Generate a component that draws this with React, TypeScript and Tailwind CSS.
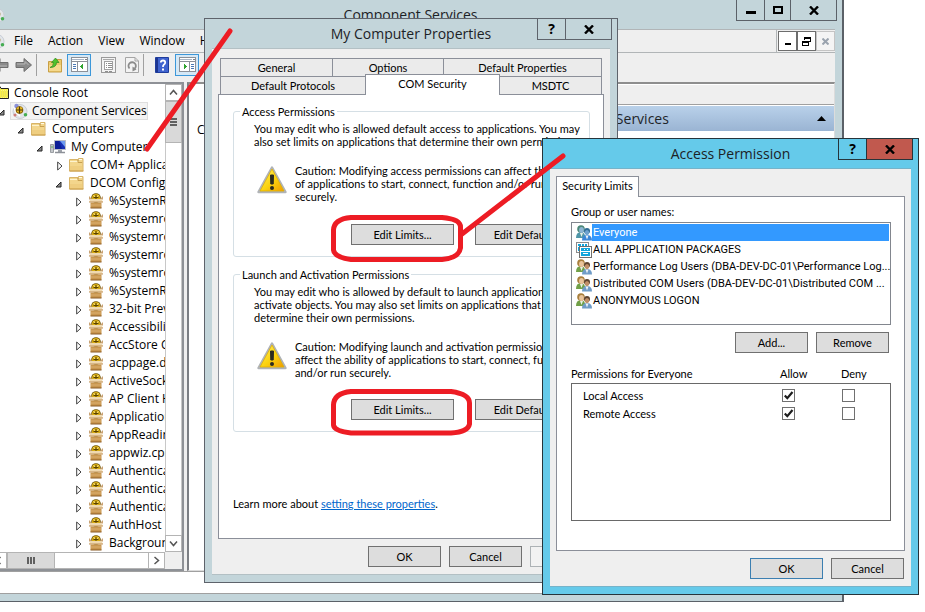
import type { ReactNode } from "react";

const uiFont = "font-['Open_Sans','Noto_Sans',sans-serif]";

/* ---------- icons ---------- */

function ComponentIcon() {
  return (
    <svg width="16" height="16" viewBox="0 0 16 16" className="shrink-0" aria-hidden="true">
      <circle cx="8" cy="8.500" r="7" fill="#e3e6ea" stroke="#c9ced6" />
      <path d="M2 4Q3 10 8 13" stroke="#fff" strokeWidth="1.500" fill="none" />
      <circle cx="4.500" cy="3" r="2.200" fill="#8a90d8" />
      <circle cx="7.500" cy="7" r="3.800" fill="#8a6200" />
      <circle cx="7.500" cy="6.800" r="3" fill="#e8bc2c" />
      <path d="M7.500 3.500v7M4 7h7" stroke="#4a3608" strokeWidth="1.200" />
      <circle cx="3" cy="12" r="1.500" fill="#cf7b78" />
      <circle cx="13.500" cy="11.800" r="1.800" fill="#45ad52" />
    </svg>
  );
}

function FolderIcon() {
  return (
    <svg width="16" height="16" viewBox="0 0 16 16" className="shrink-0" aria-hidden="true">
      <path d="M.5 2.500h8v1h1v-2h4.500v12.500H.5z" fill="#f3d68c" stroke="#d8b468" />
      <path d="M9.500 2.500h3.500" stroke="#fffbe8" />
      <path d="M1 4.500h7.500l1 1h4" stroke="#fdf3cf" fill="none" />
      <path d="M1 9h12.500v5H1z" fill="#ecc878" opacity=".6" />
      <path d="M9 2v3.500h4.500" stroke="#c8a050" fill="none" />
      <path d="M.5 14h14" stroke="#c99d48" />
    </svg>
  );
}

function RootFolderIcon() {
  return (
    <svg width="16" height="16" viewBox="0 0 16 16" className="shrink-0" aria-hidden="true">
      <path d="M1 4V13.500h14.500v-10H8l-1-2H2L1 3z" fill="#f8ef4a" stroke="#222" />
      <path d="M2 6h13M2 8h13M2 10h13M2 12h13" stroke="#fdfac0" strokeDasharray="1 1" />
      <path d="M2 7h13M2 9h13M2 11h13" stroke="#d9cf30" strokeDasharray="1 1" />
    </svg>
  );
}

function ComputerIcon() {
  return (
    <svg width="16" height="16" viewBox="0 0 16 16" className="shrink-0" aria-hidden="true">
      <path d="M.5 5.500h3v8h-3z" fill="#c4c7cb" stroke="#9a9ea3" />
      <path d="M1 8h2" stroke="#5fb15a" />
      <path d="M4.500 1.500h11v9h-11z" fill="#1730b5" stroke="#b9bdc6" />
      <path d="M10 2h5v6z" fill="#6f9bf0" />
      <path d="M5 2h4l3 8H5z" fill="#0d1f96" />
      <path d="M8 11h4v2H8z" fill="#9fa3aa" />
      <path d="M5 13.500h10" stroke="#8d9198" strokeWidth="1.500" />
    </svg>
  );
}

function BoxIcon() {
  return (
    <svg width="16" height="16" viewBox="0 0 16 16" className="shrink-0" aria-hidden="true">
      <circle cx="8" cy="5" r="4.800" fill="#6b5000" />
      <circle cx="8" cy="5" r="4" fill="#d9ae14" />
      <path d="M5.500 2.500l1.500 1M9 3.500l1.500-1" stroke="#fff0a0" />
      <path d="M8 2v4M5.500 4.500h5" stroke="#5a4200" />
      <path d="M1 3l3.500 3.500H1zM15 3l-3.500 3.500H15z" fill="#c9a273" />
      <path d="M2.500 6h11l1.500 3H1z" fill="#efd9b0" />
      <path d="M1 9h14" stroke="#c0935c" />
      <path d="M2.500 9.500h11V15h-11z" fill="#c8964f" />
      <path d="M3 12h10" stroke="#dcb073" />
      <path d="M2.500 15h11" stroke="#8a5a24" />
    </svg>
  );
}

function WarningIcon() {
  return (
    <svg width="32" height="30" viewBox="0 0 32 30" className="shrink-0" aria-hidden="true">
      <defs>
        <linearGradient id="warn" x1="0" y1="0" x2="1" y2="1">
          <stop offset="0" stopColor="#fff36a" />
          <stop offset="0.550" stopColor="#fbd20e" />
          <stop offset="1" stopColor="#f09c00" />
        </linearGradient>
      </defs>
      <path d="M15 3.500L28.500 28H1.500z" fill="#d8dadc" stroke="#b0b3b6" strokeWidth="2.400" strokeLinejoin="round" />
      <path d="M15 5L27 27H3z" fill="url(#warn)" stroke="#e0b000" strokeWidth=".8" />
      <path d="M13.500 11h3l-.3 9h-2.400z" fill="#2a2a20" stroke="#2a2a20" strokeLinejoin="round" />
      <circle cx="15" cy="24" r="2" fill="#2a2a20" />
    </svg>
  );
}

function UsersIcon({ selected = false }: { selected?: boolean }) {
  const back = selected ? "#4f96a8" : "#71a048";
  const front = selected ? "#3c87d8" : "#6f9cc8";
  const hair = selected ? "#4b8878" : "#a87f3c";
  const face = selected ? "#8db5d4" : "#e9c49c";
  return (
    <svg width="16" height="16" viewBox="0 0 16 16" className="shrink-0" aria-hidden="true">
      <path d="M0 13q0-6 5-6 4 0 4.500 6z" fill={back} />
      <path d="M4 8l1.500 4L7 8z" fill="#e8f0e6" />
      <circle cx="5" cy="4" r="3.800" fill={hair} />
      <ellipse cx="5.500" cy="5" rx="2.400" ry="2.900" fill={face} />
      <path d="M6 15.500q0-5.500 5-5.500t5 5.500z" fill={front} />
      <path d="M9.500 10.500l1.500 4 1.500-4z" fill="#eef3f8" />
      <circle cx="11" cy="6" r="3" fill={selected ? "#2f6c94" : "#5e4430"} />
      <ellipse cx="11" cy="7.600" rx="2.200" ry="2.600" fill={selected ? "#6ea2cf" : "#c08f68"} />
    </svg>
  );
}

function PackagesIcon() {
  return (
    <svg width="16" height="16" viewBox="0 0 16 16" className="shrink-0" shapeRendering="crispEdges" aria-hidden="true">
      <path d="M.5.5h12v10H.5z" fill="#fff" stroke="#8a8a8a" />
      <path d="M2 2h3v2H2zM6 2h2v2H6zM9 2h2v2H9zM2 5h9v4H2z" fill="#11a5dc" />
      <path d="M3.500 4.500h12v11h-12z" fill="#fff" stroke="#6e6e6e" />
      <path d="M5 6h9v8H5z" fill="#11a5dc" />
      <path d="M8 7h1v1H8zM11 7h1v1h-1zM5 9h9v1H5zM7 11h5v1H7z" fill="#fff" />
    </svg>
  );
}

function NavArrow({ back = false }: { back?: boolean }) {
  return (
    <svg width="18" height="16" viewBox="0 0 18 16" className={back ? "shrink-0 rotate-180" : "shrink-0"} aria-hidden="true">
      <path d="M1 5.500h8V1.500L16.500 8 9 14.500v-4H1z" fill="#8b8b8b" stroke="#6e6e6e" />
      <path d="M2 7h8V4.500L13.500 8" stroke="#b5b5b5" fill="none" />
    </svg>
  );
}

function UpFolderIcon() {
  return (
    <svg width="16" height="16" viewBox="0 0 16 16" className="shrink-0" aria-hidden="true">
      <path d="M1.500 4.500h7l1-2h5v12.500h-13z" fill="#ecc96c" stroke="#c89f45" />
      <path d="M2 8h12v6H2z" fill="#f5d98d" />
      <path d="M3 10.500q3.500-1 3.500-5H4.500L8.500 1l3.500 4.500H9.500q0 5-6.500 5z" fill="#4ec22e" stroke="#2c8a1c" strokeWidth=".7" />
    </svg>
  );
}

function PaneIcon({ right = false }: { right?: boolean }) {
  return (
    <svg width="17" height="15" viewBox="0 0 17 15" className="shrink-0" shapeRendering="crispEdges" aria-hidden="true">
      <path d="M.5.5h16v14H.5z" fill="#fff" stroke="#8c9098" />
      <path d="M1 2.500h12" stroke="#a8b4c4" />
      <path d="M14 2.500h2" stroke="#7c8088" />
      <path d="M1 4.500h15" stroke="#8c9098" />
      {right ? (
        <>
          <path d="M10.500 5v10" stroke="#8c9098" />
          <path d="M12 7.500h3M12 9.500h3M12 11.500h3" stroke="#4b79b5" />
          <path d="M5 7l3 2.500L5 12z" fill="#2fa32f" />
        </>
      ) : (
        <>
          <path d="M6.500 5v10" stroke="#8c9098" />
          <path d="M2 7.500h3M2 9.500h3M2 11.500h3" stroke="#4b79b5" />
          <path d="M12 7L9 9.500l3 2.500z" fill="#2fa32f" />
        </>
      )}
    </svg>
  );
}

function PropertiesIcon() {
  return (
    <svg width="16" height="16" viewBox="0 0 16 16" className="shrink-0" shapeRendering="crispEdges" aria-hidden="true">
      <path d="M.5.5h14v15H.5z" fill="#f3f3f3" stroke="#9a9a9a" />
      <path d="M2 2.500h11" stroke="#a8a8a8" />
      <path d="M3.500 4.500h8v8h-8z" fill="#fff" stroke="#a0a0a0" />
      <path d="M5 6.500h1M7 6.500h4M5 8.500h1M7 8.500h4M5 10.500h1M7 10.500h4M4 14.500h3M8 14.500h3" stroke="#8e8e8e" />
    </svg>
  );
}

function RefreshIcon() {
  return (
    <svg width="14" height="16" viewBox="0 0 14 16" className="shrink-0" aria-hidden="true">
      <path d="M.5.5h9.500l3.500 3.500v11.500H.5z" fill="#f3f3f3" stroke="#a5a5a5" />
      <path d="M10 .5v3.500h3.500" fill="none" stroke="#a5a5a5" />
      <path d="M4.500 11.500a3.700 3.700 0 1 1 5 .3" fill="none" stroke="#8c8c8c" strokeWidth="1.800" />
      <path d="M7.500 9.500v5l4-2z" fill="#8c8c8c" />
    </svg>
  );
}

function HelpIcon() {
  return (
    <svg width="14" height="16" viewBox="0 0 14 16" className="shrink-0" aria-hidden="true">
      <path d="M.5.5h13v15H.5z" fill="#3f63cf" stroke="#1e3c9c" />
      <path d="M1 1h2v14H1z" fill="#1c3590" />
      <path d="M5.800 5.500q0-2 2.200-2t2.200 2q0 1.200-1.200 2T8 10" fill="none" stroke="#fff" strokeWidth="1.800" />
      <path d="M7 11.500h2v2H7z" fill="#fff" />
    </svg>
  );
}

function CloseGlyph() {
  return (
    <svg width="10" height="9" viewBox="0 0 10 9" fill="none" stroke="#000" strokeWidth="2.400" aria-hidden="true">
      <path d="M1 0.500L9 8.500M9 0.500L1 8.500" />
    </svg>
  );
}

function Chevron({ d }: { d: string }) {
  return (
    <svg width="9" height="9" viewBox="0 0 9 9" fill="none" stroke="#555" strokeWidth="1.500" aria-hidden="true">
      <path d={d} />
    </svg>
  );
}

/* ---------- tree ---------- */

function TreeArrow({ state }: { state: "open" | "closed" | "none" }) {
  return (
    <span className="flex w-3 shrink-0 items-center pt-0.5">
      {state === "open" && (
        <svg width="7" height="7" viewBox="0 0 7 7" className="-ml-0.5" aria-hidden="true">
          <path d="M6 1v5H1z" fill="#8a8a8a" stroke="#262626" />
        </svg>
      )}
      {state === "closed" && (
        <svg width="6" height="10" viewBox="0 0 6 10" aria-hidden="true">
          <path d="M.7 1v8L5 5z" fill="#fff" stroke="#404040" />
        </svg>
      )}
    </span>
  );
}

type NodeProps = {
  icon: ReactNode;
  label: string;
  state?: "open" | "closed" | "none";
  selected?: boolean;
  children?: ReactNode;
};

function TreeNode({ icon, label, state = "closed", selected = false, children }: NodeProps) {
  return (
    <li role="treeitem" aria-selected={selected}>
      <div className="flex h-[18px] items-center whitespace-nowrap">
        <TreeArrow state={state} />
        <span
          className={
            selected
              ? "-ml-0.5 flex h-[18px] items-center gap-1 border border-[#dedede] bg-[#f3f3f3] pl-px"
              : "flex items-center gap-[5px]"
          }
        >
          {icon}
          {label}
        </span>
      </div>
      {children && (
        <ul role="group" className="pl-[19px]">
          {children}
        </ul>
      )}
    </li>
  );
}

const dcomItems = [
  "%SystemRoot%",
  "%systemroot%",
  "%systemroot%",
  "%systemroot%",
  "%systemroot%",
  "%SystemRoot%",
  "32-bit Preview",
  "Accessibility",
  "AccStore Class",
  "acppage.dll",
  "ActiveSocket",
  "AP Client Host",
  "Application",
  "AppReadiness",
  "appwiz.cpl",
  "Authentication",
  "Authentication",
  "Authentication",
  "AuthHost",
  "Background",
];

/* ---------- main window ---------- */

function ScrollButton({ label, d, className }: { label: string; d: string; className: string }) {
  return (
    <button aria-label={label} className={`flex shrink-0 items-center justify-center border border-[#b4b4b4] bg-white ${className}`}>
      <Chevron d={d} />
    </button>
  );
}

function ConsoleTree() {
  return (
    <div className="flex w-[184px] shrink-0 flex-col border-t-2 border-r-2 border-b-2 border-[#8e9196] bg-white">
      <div className="flex h-[468px]">
        <ul role="tree" className="-ml-[19px] min-w-0 flex-1 overflow-hidden text-xs">
          <TreeNode icon={<RootFolderIcon />} label="Console Root" state="none">
            <TreeNode icon={<ComponentIcon />} label="Component Services" state="open" selected>
              <TreeNode icon={<FolderIcon />} label="Computers" state="open">
                <TreeNode icon={<ComputerIcon />} label="My Computer" state="open">
                  <TreeNode icon={<FolderIcon />} label="COM+ Applications" />
                  <TreeNode icon={<FolderIcon />} label="DCOM Config" state="open">
                    {dcomItems.map((name, i) => (
                      <TreeNode key={i} icon={<BoxIcon />} label={name} />
                    ))}
                  </TreeNode>
                </TreeNode>
              </TreeNode>
            </TreeNode>
          </TreeNode>
        </ul>
        <div className="flex w-[17px] shrink-0 flex-col border-x border-[#c8c8c8]">
          <ScrollButton label="Scroll up" d="M1 6.500L4.500 2.500 8 6.500" className="-mx-px h-[17px]" />
          <div className="-mx-px flex h-[42px] flex-col items-center justify-center gap-px border border-[#b4b4b4] bg-[#d9d9d9]">
            <span className="h-0.5 w-[7px] bg-[#606060]" />
            <span className="h-0.5 w-[7px] bg-[#606060]" />
            <span className="h-0.5 w-[7px] bg-[#606060]" />
          </div>
          <div className="flex-1" />
          <ScrollButton label="Scroll down" d="M1 2.500L4.500 6.500 8 2.500" className="-mx-px h-[17px]" />
        </div>
      </div>
      <div className="flex h-[17px] bg-[#efefef] pr-[17px]">
        <div className="flex flex-1 border-y border-[#b4b4b4] bg-white">
          <ScrollButton label="Scroll left" d="M6.500 1L2.500 4.500 6.500 8" className="-my-px -ml-[10px] w-[17px]" />
          <div className="-my-px flex w-12 items-center justify-center gap-px border border-[#b4b4b4] bg-[#d9d9d9]">
            <span className="h-[7px] w-0.5 bg-[#606060]" />
            <span className="h-[7px] w-0.5 bg-[#606060]" />
            <span className="h-[7px] w-0.5 bg-[#606060]" />
          </div>
          <div className="flex-1" />
          <ScrollButton label="Scroll right" d="M2.500 1L6.500 4.500 2.500 8" className="-my-px w-[17px]" />
        </div>
      </div>
    </div>
  );
}

function MainWindow() {
  return (
    <section
      aria-label="Component Services"
      className={`absolute top-0 left-0 flex h-[602px] w-[844px] flex-col border-r-2 border-b border-[#5b6168] bg-[#c3d5da] pr-[7px] pb-[7px] text-black ${uiFont}`}
    >
      <header className="flex h-[29px] shrink-0 items-center">
        <span className="-ml-[11px]">
          <ComponentIcon />
        </span>
        <h1 className="flex-1 pl-20 text-center text-sm text-[#1c2226]">Component Services</h1>
        <div className="-mr-0.5 flex h-[21px] self-start border-x border-b border-[#5b6168]">
          <button aria-label="Minimize" className="flex w-7 items-center justify-center border-r border-[#5b6168]">
            <span className="mt-1 h-[3px] w-2.5 bg-black" />
          </button>
          <button aria-label="Maximize" className="flex w-[26px] items-center justify-center border-r border-[#5b6168]">
            <span className="h-2 w-2.5 border-2 border-black" />
          </button>
          <button aria-label="Close" className="flex w-[45px] items-center justify-center">
            <CloseGlyph />
          </button>
        </div>
      </header>

      <nav className="flex h-6 shrink-0 items-stretch border-y border-[#b1b5b7] bg-[#efefef] text-xs">
        <div className="flex flex-1 items-center gap-[15px] border-r border-[#b1b5b7]">
          <span className="-mr-1.5 -ml-[11px]">
            <ComponentIcon />
          </span>
          <button>File</button>
          <button>Action</button>
          <button>View</button>
          <button>Window</button>
          <button>Help</button>
        </div>
        <div className="ml-px flex h-5 self-center">
          <button aria-label="Minimize child" className="flex w-[19px] items-center justify-center border border-[#6d6d6d] bg-white">
            <span className="mt-1.5 h-0.5 w-1.5 bg-black" />
          </button>
          <button aria-label="Restore child" className="flex w-[19px] items-center justify-center border border-[#6d6d6d] bg-white">
            <svg width="9" height="9" viewBox="0 0 9 9" fill="none" stroke="#000" shapeRendering="crispEdges" aria-hidden="true">
              <path d="M2.500 3V.5h6v4H7M2 1.500h7M.5 4.500h6v4h-6zM0 5.500h7" />
            </svg>
          </button>
          <button aria-label="Close child" className="flex w-[19px] items-center justify-center border border-[#c4c4c4] bg-[#f4f4f4]">
            <svg width="7" height="7" viewBox="0 0 7 7" stroke="#9aa3ae" strokeWidth="2" aria-hidden="true">
              <path d="M.5.5l6 6M6.500.5l-6 6" />
            </svg>
          </button>
        </div>
      </nav>

      <div className="flex h-[29px] shrink-0 items-center bg-[#efefef] pb-1.5">
        <button aria-label="Back" className="-ml-[9px]">
          <NavArrow back />
        </button>
        <button aria-label="Forward" className="ml-1.5">
          <NavArrow />
        </button>
        <span className="ml-[3px] h-[22px] w-px bg-[#a0a0a0]" />
        <button aria-label="Up one level" className="ml-2.5">
          <UpFolderIcon />
        </button>
        <button aria-label="Show console tree" className="ml-1 flex h-[22px] w-6 items-center justify-center border border-[#3c97d9] bg-[#d5e8f6]">
          <PaneIcon />
        </button>
        <button aria-label="Properties" className="ml-2.5">
          <PropertiesIcon />
        </button>
        <button aria-label="Refresh" className="ml-2">
          <RefreshIcon />
        </button>
        <span className="ml-1 h-[22px] w-px bg-[#a0a0a0]" />
        <button aria-label="Help topics" className="ml-[11px]">
          <HelpIcon />
        </button>
        <button aria-label="Show action pane" className="ml-1.5 flex h-[22px] w-6 items-center justify-center border border-[#3c97d9] bg-[#d5e8f6]">
          <PaneIcon right />
        </button>
      </div>

      <div className="flex shrink-0 bg-[#efefef]">
        <ConsoleTree />
        <div className="ml-[3px] flex flex-1 border-t-2 border-r border-b border-l-2 border-t-[#8e8e8e] border-r-[#dcdcdc] border-b-[#dcdcdc] border-l-[#7c7f84] bg-white">
          <div className="w-[300px] pt-[38px] pl-2 text-xs">Computers</div>
          <div className="flex-1 pt-px">
            <div className="h-5 border-b border-[#a0a0a0] bg-[#efefef]" />
            <div className="mt-px flex h-[25px] items-center bg-linear-to-b from-[#b9d1ea] to-[#9ab4d3] pr-2 pl-[46px] text-sm text-[#1e2429]">
              <span className="flex-1">Component Services</span>
              <svg width="9" height="5" viewBox="0 0 9 5" aria-hidden="true">
                <path d="M4.500 0L9 5H0z" />
              </svg>
            </div>
          </div>
        </div>
      </div>
      <div className="flex-1 border-y border-[#a0a0a0] bg-white" />
    </section>
  );
}

/* ---------- dialogs ---------- */

const dialogFont = "font-['Lato','Liberation_Sans',Arial,sans-serif] text-[11px] leading-[13px] text-black";

function PushButton({
  children,
  className,
  look = "border-[#707070] bg-[#dddddd]",
  disabled,
}: {
  children: ReactNode;
  className: string;
  look?: string;
  disabled?: boolean;
}) {
  return (
    <button disabled={disabled} className={`h-[21px] border text-center ${look} ${className}`}>
      {children}
    </button>
  );
}

function DialogHeader({ title, line, close }: { title: string; line: string; close: string }) {
  return (
    <header className="relative flex h-[29px] shrink-0 items-center justify-center">
      <h2 className={`text-sm text-[#1c2226] ${uiFont}`}>{title}</h2>
      <div className={`absolute -top-px -right-0.5 flex h-[22px] border ${line}`}>
        <button aria-label="Help" className={`w-7 border-r text-center text-sm leading-none font-bold ${line} ${uiFont}`}>
          ?
        </button>
        <button aria-label="Close" className={`flex w-[45px] items-center justify-center ${close}`}>
          <CloseGlyph />
        </button>
      </div>
    </header>
  );
}

const tabLook = "border border-[#8b8f99] bg-[#ebebeb] text-center";

function PermissionGroup({
  title,
  intro,
  caution,
  buttonGap,
}: {
  title: string;
  intro: string[];
  caution: string[];
  buttonGap: string;
}) {
  return (
    <fieldset className="rounded-[3px] border border-[#d5dfe5] pb-[11px] pl-5">
      <legend className="-ml-[14px] px-0.5 leading-[13px]">{title}</legend>
      <p className="mt-1">
        {intro.map((line) => (
          <span key={line} className="block whitespace-nowrap">
            {line}
          </span>
        ))}
      </p>
      <div className="mt-4 flex items-start gap-1.5 pl-[3px]">
        <WarningIcon />
        <p>
          {caution.map((line) => (
            <span key={line} className="block whitespace-nowrap">
              {line}
            </span>
          ))}
        </p>
      </div>
      <div className={`flex gap-[21px] pl-[97px] ${buttonGap}`}>
        <PushButton className="w-[103px]">Edit Limits...</PushButton>
        <PushButton className="w-[103px]">Edit Default...</PushButton>
      </div>
    </fieldset>
  );
}

function PropertiesDialog() {
  return (
    <section
      role="dialog"
      aria-label="My Computer Properties"
      className={`absolute top-[18px] left-[204px] flex h-[565px] w-[414px] flex-col border border-[#5e636b] bg-[#c3d5da] px-[7px] pb-[7px] ${dialogFont}`}
    >
      <DialogHeader title="My Computer Properties" line="border-[#5e636b]" close="" />
      <div className="flex flex-1 flex-col border-y border-[#b3c0c4] bg-[#efefef] px-[6px] pt-[9px]">
        <div role="tablist" className="px-0.5">
          <div className="flex h-[18px]">
            <button role="tab" className={`w-[113px] border-b-0 ${tabLook}`}>General</button>
            <button role="tab" className={`-ml-px w-[112px] border-b-0 ${tabLook}`}>Options</button>
            <button role="tab" className={`-ml-px flex-1 border-b-0 ${tabLook}`}>Default Properties</button>
          </div>
          <div className="flex h-[18px] items-end">
            <button role="tab" className={`h-[18px] w-[146px] border-b-0 ${tabLook}`}>Default Protocols</button>
            <button
              role="tab"
              aria-selected="true"
              className="relative -mx-px -mb-px h-[21px] w-[135px] border border-b-0 border-[#8b8f99] bg-white pb-1 text-center"
            >
              COM Security
            </button>
            <button role="tab" className={`h-[18px] flex-1 border-b-0 ${tabLook}`}>MSDTC</button>
          </div>
        </div>
        <div role="tabpanel" className="flex h-[445px] flex-col border border-[#8b8f99] bg-white pt-2.5 pr-[13px] pl-3.5">
          <PermissionGroup
            title="Access Permissions"
            buttonGap="mt-[21px]"
            intro={[
              "You may edit who is allowed default access to applications. You may",
              "also set limits on applications that determine their own permissions.",
            ]}
            caution={[
              "Caution: Modifying access permissions can affect the ability",
              "of applications to start, connect, function and/or run",
              "securely.",
            ]}
          />
          <div className="h-[11px]" />
          <PermissionGroup
            title="Launch and Activation Permissions"
            buttonGap="mt-5"
            intro={[
              "You may edit who is allowed by default to launch applications or",
              "activate objects. You may also set limits on applications that",
              "determine their own permissions.",
            ]}
            caution={[
              "Caution: Modifying launch and activation permissions can",
              "affect the ability of applications to start, connect, function",
              "and/or run securely.",
            ]}
          />
          <p className="mt-auto mb-7">
            Learn more about{" "}
            <a href="#properties" className="text-[#0066cc] underline">
              setting these properties
            </a>
            .
          </p>
        </div>
        <div className="mt-[7px] flex justify-end gap-2 pr-px">
          <PushButton className="w-[73px]">OK</PushButton>
          <PushButton className="w-[73px]">Cancel</PushButton>
          <PushButton className="w-[73px]" look="border-[#adb2b5] bg-[#f2f2f2] text-[#9a9a9a]" disabled>
            Apply
          </PushButton>
        </div>
      </div>
    </section>
  );
}

const principals = [
  { name: "Everyone", icon: <UsersIcon selected />, selected: true },
  { name: "ALL APPLICATION PACKAGES", icon: <PackagesIcon />, selected: false },
  { name: "Performance Log Users (DBA-DEV-DC-01\\Performance Log...", icon: <UsersIcon />, selected: false },
  { name: "Distributed COM Users (DBA-DEV-DC-01\\Distributed COM ...", icon: <UsersIcon />, selected: false },
  { name: "ANONYMOUS LOGON", icon: <UsersIcon />, selected: false },
];

function Tick({ label, checked = false }: { label: string; checked?: boolean }) {
  return (
    <span className="relative block size-[13px]">
      <input
        type="checkbox"
        aria-label={label}
        defaultChecked={checked}
        className="peer block size-[13px] appearance-none border border-[#707070] bg-white"
      />
      <svg
        width="13"
        height="13"
        viewBox="0 0 13 13"
        className="pointer-events-none absolute inset-0 hidden peer-checked:block"
        fill="none"
        stroke="#1d1d1d"
        strokeWidth="2.200"
        aria-hidden="true"
      >
        <path d="M2.800 6.500L5.300 9.200 10.500 3" />
      </svg>
    </span>
  );
}

function AccessDialog() {
  return (
    <section
      role="dialog"
      aria-label="Access Permission"
      className={`absolute top-[138px] left-[542px] flex h-[457px] w-[377px] flex-col border border-[#26343b] bg-[#65caea] px-[7px] pb-[7px] ${dialogFont}`}
    >
      <DialogHeader title="Access Permission" line="border-[#26343b]" close="bg-[#c1594e]" />
      <div className="flex flex-1 flex-col border-y border-[#76b3c9] bg-[#efefef] px-[6px] pt-[7px]">
        <div role="tablist" className="flex">
          <button
            role="tab"
            aria-selected="true"
            className="relative -mb-px h-[21px] w-[83px] border border-b-0 border-[#8b8f99] bg-white pb-1 text-center"
          >
            Security Limits
          </button>
        </div>
        <div role="tabpanel" className="flex h-[355px] flex-col border border-[#8b8f99] bg-white pt-2 pr-[13px] pl-3.5">
          <p id="names">Group or user names:</p>
          <ul
            role="listbox"
            aria-labelledby="names"
            className="mt-1 h-[103px] border border-[#82868e] py-px pr-px pl-1 font-['Roboto','Liberation_Sans',sans-serif]"
          >
            {principals.map((p) => (
              <li key={p.name} role="option" aria-selected={p.selected} className="flex h-[17px] items-center">
                {p.icon}
                <span
                  className={
                    p.selected
                      ? "flex h-[17px] flex-1 items-center bg-[#3399ff] pl-px text-white"
                      : "flex h-[17px] flex-1 items-center pl-px whitespace-nowrap"
                  }
                >
                  {p.name}
                </span>
              </li>
            ))}
          </ul>
          <div className="mt-[7px] flex justify-end gap-2 pr-0.5">
            <PushButton className="w-[73px]">Add...</PushButton>
            <PushButton className="w-[73px]">Remove</PushButton>
          </div>
          <table className="mt-[14px] w-full table-fixed border-separate border-spacing-0">
            <colgroup>
              <col />
              <col className="w-[61px]" />
              <col className="w-[50px]" />
            </colgroup>
            <thead>
              <tr className="h-4 text-left align-top">
                <th className="font-normal">Permissions for Everyone</th>
                <th className="font-normal">Allow</th>
                <th className="font-normal">Deny</th>
              </tr>
            </thead>
            <tbody>
              <tr className="h-[22px]">
                <td className="border-t border-l border-[#696969] pt-0.5 pl-[11px]">Local Access</td>
                <td className="border-t border-[#696969] pt-0.5 pl-0.5">
                  <Tick label="Allow Local Access" checked />
                </td>
                <td className="border-t border-r border-[#696969] pt-0.5 pl-px">
                  <Tick label="Deny Local Access" />
                </td>
              </tr>
              <tr className="h-[18px] align-top">
                <td className="border-l border-[#696969] pt-0.5 pl-[11px]">Remote Access</td>
                <td className="pt-0.5 pl-0.5">
                  <Tick label="Allow Remote Access" checked />
                </td>
                <td className="border-r border-[#696969] pt-0.5 pl-px">
                  <Tick label="Deny Remote Access" />
                </td>
              </tr>
              <tr className="h-[98px]">
                <td colSpan={3} className="border-x border-b border-[#696969]" />
              </tr>
            </tbody>
          </table>
        </div>
        <div className="mt-[7px] flex justify-end gap-2 pr-px">
          <PushButton className="w-[73px]" look="border-[#3c7fb1] bg-[#dddddd]">OK</PushButton>
          <PushButton className="w-[73px]">Cancel</PushButton>
        </div>
      </div>
    </section>
  );
}

/* Red marker strokes that lead from the tree to the dialogs. */
function Annotations() {
  return (
    <svg
      width="925"
      height="612"
      viewBox="0 0 925 612"
      className="pointer-events-none absolute top-0 left-0"
      fill="none"
      stroke="#ed1c24"
      strokeWidth="5"
      strokeLinecap="round"
      aria-hidden="true"
    >
      <path d="M230 31L147 149M563 156L462 234" />
      <path d="M351 217.500H442Q460.500 219 460.500 227V248Q459 258 442 259.500H351Q334 257 333.500 250V230Q334 219 351 217.500z" />
      <path d="M351 391.500H451Q469.500 394 469.500 403V424Q468 432 451 433H351Q334 431 333.500 425V405Q334 393 351 391.500z" />
    </svg>
  );
}

export default function App() {
  return (
    <main className="relative min-h-screen w-full overflow-hidden bg-white">
      <MainWindow />
      <PropertiesDialog />
      <AccessDialog />
      <Annotations />
    </main>
  );
}
